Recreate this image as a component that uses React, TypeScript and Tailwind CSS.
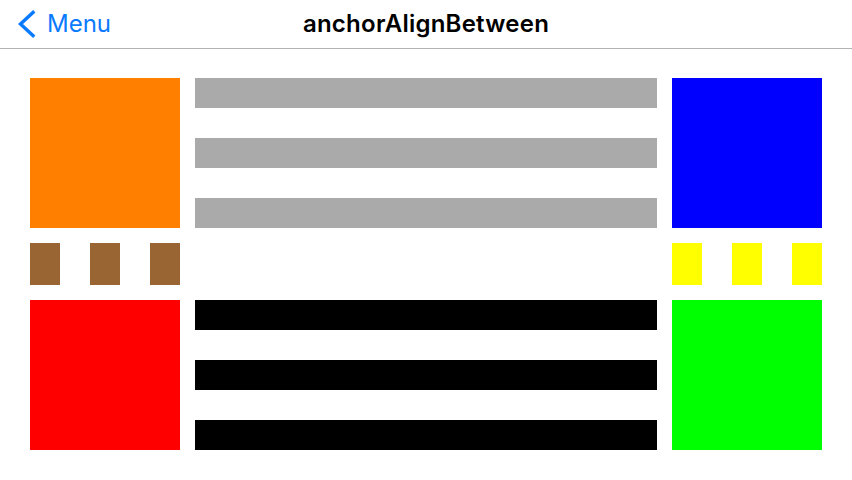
const Bars = ({ color }: { color: string }) => (
  <div className="flex flex-1 flex-col justify-between">
    <div className={`h-[30px] ${color}`} />
    <div className={`h-[30px] ${color}`} />
    <div className={`h-[30px] ${color}`} />
  </div>
);

const Chips = ({ color }: { color: string }) => (
  <div className="flex w-[150px] justify-between">
    <div className={`h-[42px] w-[30px] ${color}`} />
    <div className={`h-[42px] w-[30px] ${color}`} />
    <div className={`h-[42px] w-[30px] ${color}`} />
  </div>
);

export default function App() {
  return (
    <div className="h-[480px] w-[852px] overflow-hidden bg-white font-['Inter',sans-serif]">
      <header className="relative flex h-[49px] items-center justify-center border-b border-[#b2b2b2]">
        <div className="absolute left-[15px] top-0 flex h-[48px] items-center gap-[8px] text-[#0a7aff]">
          <svg width="24" height="28" viewBox="0 0 24 28" fill="none">
            <path d="M18 2.5 L5.5 14 L18 25.5" stroke="#0a7aff" strokeWidth="3.4" strokeLinecap="square" />
          </svg>
          <span className="text-[24px] leading-none">Menu</span>
        </div>
        <h1 className="text-[24px] font-semibold leading-none tracking-[0.01em] text-black">anchorAlignBetween</h1>
      </header>

      <main className="flex flex-col gap-[15px] px-[30px] pt-[29px]">
        <div className="flex h-[150px] gap-[15px]">
          <div className="w-[150px] bg-[#ff8000]" />
          <Bars color="bg-[#aaaaaa]" />
          <div className="w-[150px] bg-[#0000ff]" />
        </div>
        <div className="flex justify-between">
          <Chips color="bg-[#996633]" />
          <Chips color="bg-[#ffff00]" />
        </div>
        <div className="flex h-[150px] gap-[15px]">
          <div className="w-[150px] bg-[#ff0000]" />
          <Bars color="bg-black" />
          <div className="w-[150px] bg-[#00ff00]" />
        </div>
      </main>
    </div>
  );
}
